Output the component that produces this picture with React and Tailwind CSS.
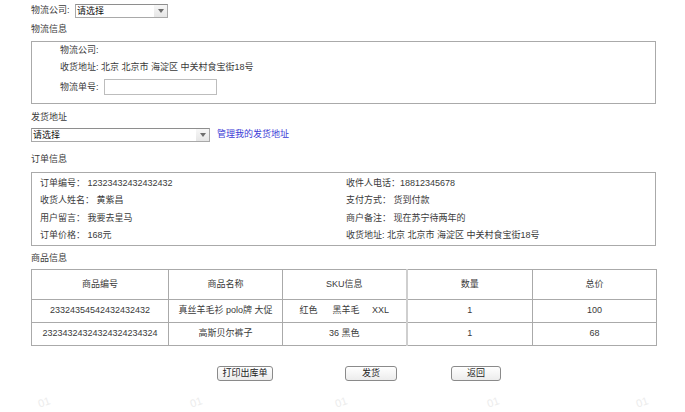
export default function App() {
  const goods = [
    { no: "23324354542432432432", name: "真丝羊毛衫 polo牌 大促", sku: "红色\u00a0\u00a0\u00a0\u00a0\u00a0\u00a0黑羊毛\u00a0\u00a0\u00a0\u00a0\u00a0XXL", qty: "1", total: "100" },
    { no: "23234324324324324234324", name: "高斯贝尔裤子", sku: "36 黑色", qty: "1", total: "68" },
  ];
  const marks = [38, 190, 335, 487, 636];

  const Select = ({ w }) => (
    <div
      className="flex h-[14px] items-stretch border border-[#a9a9a9] border-t-[#8e8e8e] bg-white"
      style={{ width: w }}
    >
      <span className="flex-1 pl-[1px] leading-[12px] text-[#111]">请选择</span>
      <span className="flex w-[13px] items-center justify-center bg-gradient-to-b from-[#f7f7f7] to-[#e6e6e6]">
        <svg width="6" height="4" viewBox="0 0 6 4">
          <path d="M0 0h6L3 4z" fill="#6e6e6e" />
        </svg>
      </span>
    </div>
  );

  const Btn = ({ children, w, className }) => (
    <button
      className={`h-[15px] rounded-[3px] border border-[#8a8a8a] bg-gradient-to-b from-white to-[#ececec] text-[9px] leading-[13px] text-[#222] ${className}`}
      style={{ width: w }}
    >
      {children}
    </button>
  );

  return (
    <div
      className="relative h-[412px] w-[685px] overflow-hidden bg-white text-[9px] text-[#3a3a3a]"
      style={{ fontFamily: '"Liberation Sans", "Noto Sans CJK SC", sans-serif' }}
    >
      {/* watermark */}
      {marks.map((x) => (
        <span
          key={x}
          className="absolute top-[396px] -rotate-[18deg] text-[11px] leading-[12px] text-[#ececec]"
          style={{ left: x }}
        >
          01
        </span>
      ))}

      <div className="relative h-[394px] bg-white pl-[31px] pt-[4px]">
        <div className="flex h-[14px] items-center">
          <span className="w-[44px]">物流公司:</span>
          <Select w={93} />
        </div>

        <div className="mt-[5px] h-[12px] leading-[12px]">物流信息</div>

        <div className="mt-[6px] h-[63px] w-[625px] border border-[#aaa] pl-[28px] pt-[2px] leading-[12px]">
          <div className="h-[12px]">物流公司:</div>
          <div className="mt-[5px] h-[12px]">收货地址: 北京 北京市 海淀区 中关村食宝街18号</div>
          <div className="mt-[6px] flex h-[16px] items-center">
            <span className="w-[44px]">物流单号:</span>
            <span className="h-[16px] w-[113px] border border-[#bdbdbd] bg-white" />
          </div>
        </div>

        <div className="mt-[7px] h-[12px] leading-[12px]">发货地址</div>

        <div className="mt-[5px] flex h-[14px] items-center">
          <Select w={179} />
          <span className="ml-[7px] text-[#3a3ad6]">管理我的发货地址</span>
        </div>

        <div className="mt-[11px] h-[12px] leading-[12px]">订单信息</div>

        <div className="mt-[7px] grid h-[74px] w-[625px] grid-cols-[306px_1fr] border border-[#aaa] pl-[8px] pt-[1.5px]">
          <div className="h-[17.3px] leading-[17.3px]">订单编号：&nbsp;12323432432432432</div>
          <div className="h-[17.3px] leading-[17.3px]">收件人电话：18812345678</div>
          <div className="h-[17.3px] leading-[17.3px]">收货人姓名：&nbsp;黄紫昌</div>
          <div className="h-[17.3px] leading-[17.3px]">支付方式：&nbsp;货到付款</div>
          <div className="h-[17.3px] leading-[17.3px]">用户留言：&nbsp;我要去皇马</div>
          <div className="h-[17.3px] leading-[17.3px]">商户备注：&nbsp;现在苏宁待两年的</div>
          <div className="h-[17.3px] leading-[17.3px]">订单价格：&nbsp;168元</div>
          <div className="h-[17.3px] leading-[17.3px]">收货地址: 北京 北京市 海淀区 中关村食宝街18号</div>
        </div>

        <div className="mt-[6px] h-[12px] leading-[12px]">商品信息</div>

        <table className="mt-[5px] w-[625px] table-fixed border-collapse text-center">
          <colgroup>
            <col className="w-[137px]" />
            <col className="w-[114px]" />
            <col className="w-[124px]" />
            <col className="w-[126px]" />
            <col className="w-[124px]" />
          </colgroup>
          <thead>
            <tr className="h-[30px]">
              <th className="border border-[#aaa] font-normal">商品编号</th>
              <th className="border border-[#aaa] font-normal">商品名称</th>
              <th className="border border-[#aaa] font-normal">SKU信息</th>
              <th className="border border-[#aaa] border-l-[2px] border-l-[#cfcfcf] font-normal">数量</th>
              <th className="border border-[#aaa] font-normal">总价</th>
            </tr>
          </thead>
          <tbody>
            {goods.map((g) => (
              <tr key={g.no} className="h-[23px]">
                <td className="border border-[#aaa]">{g.no}</td>
                <td className="border border-[#aaa]">{g.name}</td>
                <td className="border border-[#aaa]">{g.sku}</td>
                <td className="border border-[#aaa] border-l-[2px] border-l-[#cfcfcf]">{g.qty}</td>
                <td className="border border-[#aaa]">{g.total}</td>
              </tr>
            ))}
          </tbody>
        </table>

        <div className="mt-[20px] flex h-[15px] items-center">
          <Btn w={56} className="ml-[186px]">打印出库单</Btn>
          <Btn w={52} className="ml-[72px]">发货</Btn>
          <Btn w={50} className="ml-[54px]">返回</Btn>
        </div>
      </div>
    </div>
  );
}
